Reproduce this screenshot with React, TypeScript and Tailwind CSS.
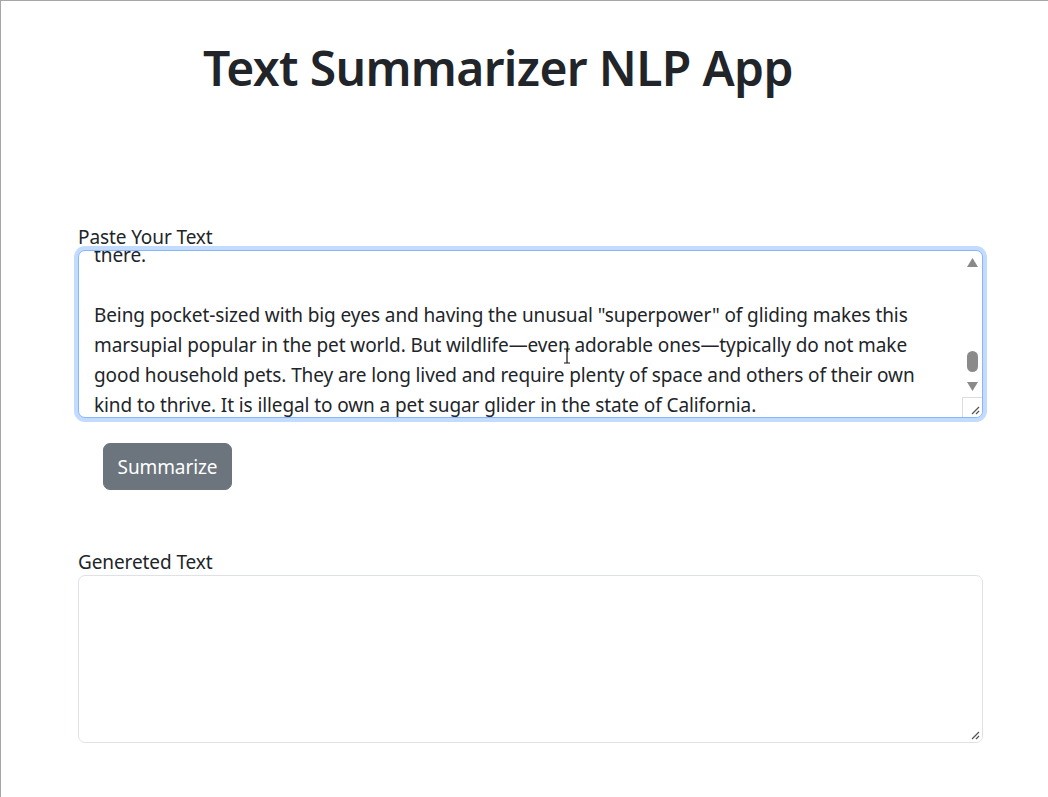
import React from 'react';

const FONT = "font-['Noto_Sans',_'Open_Sans',_sans-serif]";

const pastedLines = [
  'there.',
  '',
  'Being pocket-sized with big eyes and having the unusual "superpower" of gliding makes this',
  'marsupial popular in the pet world. But wildlife\u2014even adorable ones\u2014typically do not make',
  'good household pets. They are long lived and require plenty of space and others of their own',
  'kind to thrive. It is illegal to own a pet sugar glider in the state of California.',
];

function ResizeGrip() {
  return (
    <svg width="10" height="10" viewBox="0 0 10 10" className="block">
      <path d="M9 2 L2 9" stroke="#555" strokeWidth="1.2" />
      <path d="M9 6 L6 9" stroke="#555" strokeWidth="1.2" />
    </svg>
  );
}

function FakeScrollbar() {
  return (
    <div className="w-[20px] flex flex-col items-center">
      <svg width="11" height="9" viewBox="0 0 11 9" className="mt-[7px]">
        <path d="M5.5 0 L11 9 L0 9 Z" fill="#8a8a8a" />
      </svg>
      <div className="mt-[84px] w-[11px] h-[21px] rounded-full bg-[#8a8a8a]" />
      <svg width="11" height="9" viewBox="0 0 11 9" className="mt-[10px]">
        <path d="M0 0 L11 0 L5.5 9 Z" fill="#8a8a8a" />
      </svg>
      <div className="mt-auto w-[20px] h-[20px] bg-white border-t border-l border-[#dcdcdc] flex items-end justify-end pr-[2px] pb-[2px]">
        <ResizeGrip />
      </div>
    </div>
  );
}

export default function App() {
  return (
    <div className={`min-h-[797px] bg-white border-t border-l border-[#a6a6a6] text-[#212529] ${FONT}`}>
      <div className="w-[905px] ml-[77px]">
        <h1 className="pt-[37px] pl-[125px] text-[48px] leading-[60px] font-semibold tracking-[-0.65px] text-[#212529]">
          Text Summarizer NLP App
        </h1>

        <div className="mt-[124px]">
          <label className="block h-[28px] text-[19px] leading-[30px] tracking-[-0.1px]">Paste Your Text</label>
          <div className="relative h-[168px] flex rounded-[7px] border border-[#86b7fe] shadow-[0_0_0_4px_rgba(13,110,253,0.25)] bg-white overflow-hidden">
            <div className="flex-1 overflow-hidden pl-[15px]">
              <div className="-mt-[11px] text-[19px] leading-[30px] tracking-[-0.1px] whitespace-pre">
                {pastedLines.map((line, i) => (
                  <div key={i} className="h-[30px]">{line}</div>
                ))}
              </div>
            </div>
            <FakeScrollbar />
            {/* text cursor */}
            <svg width="8" height="16" viewBox="0 0 8 16" className="absolute left-[484px] top-[97px]">
              <path d="M1 1 H7 M4 1 V15 M1 15 H7" stroke="#111" strokeWidth="1.2" fill="none" />
            </svg>
          </div>

          <button className="mt-[25px] ml-[25px] w-[129px] h-[47px] rounded-[7px] bg-[#6c757d] border border-[#6c757d] text-white text-[19px] leading-[30px] tracking-[-0.1px]">
            Summarize
          </button>
        </div>

        <div className="mt-[57px]">
          <label className="block h-[28px] text-[19px] leading-[30px] tracking-[-0.1px]">Genereted Text</label>
          <div className="h-[168px] rounded-[7px] border border-[#dee2e6] bg-white flex items-end justify-end pr-[2px] pb-[2px]">
            <ResizeGrip />
          </div>
        </div>
      </div>
    </div>
  );
}
